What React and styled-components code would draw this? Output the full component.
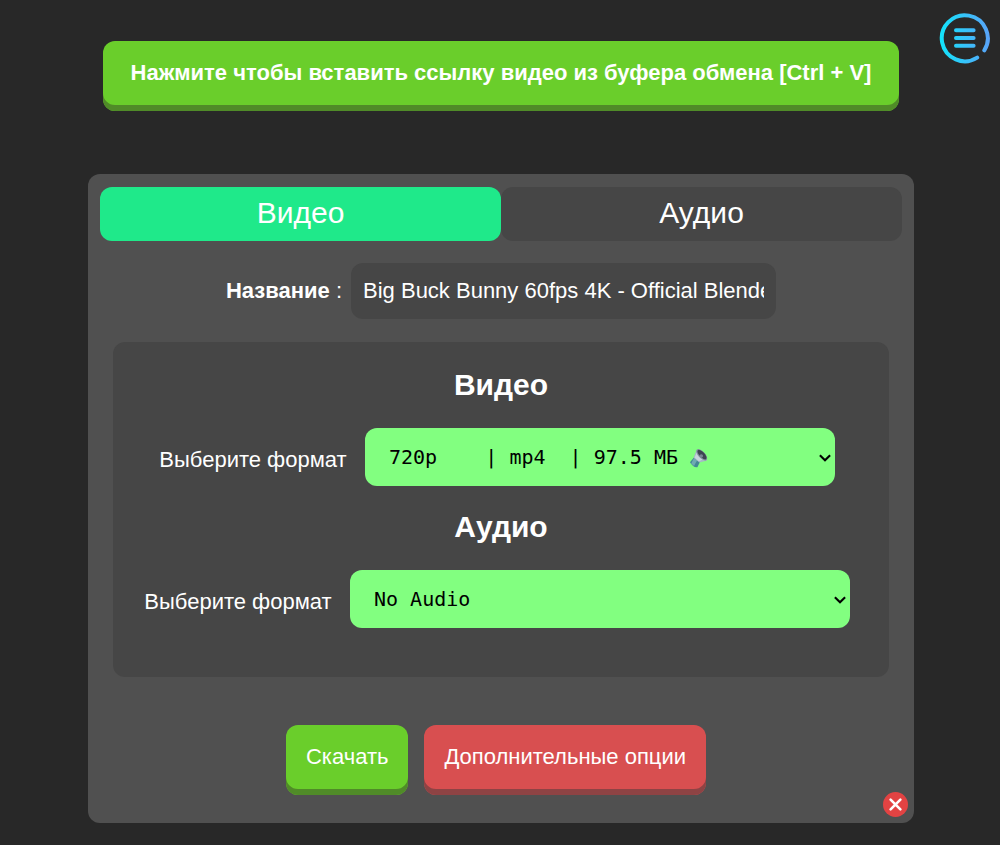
import React from "react";
import styled, { createGlobalStyle } from "styled-components";

const GlobalStyle = createGlobalStyle`
  *, *::before, *::after { box-sizing: border-box; }
  body {
    margin: 0;
    background: #282828;
    color: #fff;
    font: 22px/26px "Liberation Sans", Arial, sans-serif;
  }
  button, input { font: inherit; color: inherit; border: 0; }
  button { cursor: pointer; }
`;

const Page = styled.main`
  display: flex;
  flex-direction: column;
  align-items: center;
  min-height: 100vh;
  padding: 41px 12px 22px 14px;
`;

const Button = styled.button`
  height: 70px;
  padding: 0 20px 6px;
  border-radius: 12px;
  background: ${(p) => (p.$danger ? "#d84f50" : "#6ace2b")};
  box-shadow: inset 0 -6px 0 ${(p) => (p.$danger ? "#8e4344" : "#508b28")};
`;

const PasteButton = styled(Button)`
  width: 100%;
  max-width: 796px;
  font-weight: bold;
  white-space: nowrap;
`;

const MenuButton = styled.button`
  position: absolute;
  top: 12px;
  right: 9px;
  width: 52px;
  height: 52px;
  padding: 0;
  background: none;
  svg { display: block; }
`;

const Card = styled.section`
  position: relative;
  width: 100%;
  max-width: 826px;
  margin-top: 63px;
  padding: 13px 12px 28px;
  border-radius: 12px;
  background: #505050;
`;

const Tabs = styled.div`
  display: grid;
  grid-template-columns: 1fr 1fr;
`;

const Tab = styled.button`
  height: 54px;
  padding: 0 0 2px;
  border-radius: 12px;
  background: ${(p) => (p.$active ? "#1fe98a" : "#464646")};
  font-size: 30px;
  line-height: 34px;
`;

const NameRow = styled.div`
  display: flex;
  align-items: center;
  justify-content: center;
  gap: 9px;
  margin: 22px 0 23px;
`;

const NameInput = styled.input`
  width: 425px;
  height: 56px;
  padding: 0 12px;
  border-radius: 12px;
  background: #464646;
`;

const Panel = styled.div`
  margin: 0 13px;
  padding: 26px 10px 49px 0;
  border-radius: 12px;
  background: #464646;
`;

const Heading = styled.h2`
  margin: 0 0 26px 10px;
  font-size: 30px;
  line-height: 34px;
  text-align: center;
`;

const FormatRow = styled.div`
  display: flex;
  align-items: center;
  justify-content: center;
  gap: 16px;
  & + h2 { margin-top: 24px; }
`;

const Label = styled.label`
  min-width: 192px;
  padding-top: 5px;
  text-align: center;
  white-space: nowrap;
`;

const SelectBox = styled.div`
  position: relative;
  width: ${(p) => (p.$wide ? "500px" : "470px")};
`;

const Select = styled.select`
  appearance: none;
  display: block;
  width: 100%;
  height: 58px;
  padding: 0 24px;
  border: 0;
  border-radius: 12px;
  background-color: #82ff80;
  color: #000;
  font: 20px/26px "DejaVu Sans Mono", monospace;
`;

const Chevron = styled.svg`
  position: absolute;
  right: 3px;
  top: 25px;
  pointer-events: none;
`;

const Speaker = styled.svg`
  position: absolute;
  left: 324px;
  top: 20px;
  pointer-events: none;
`;

const Actions = styled.div`
  display: flex;
  justify-content: center;
  gap: 16px;
  margin: 48px 10px 0 0;
`;

const CloseButton = styled.button`
  position: absolute;
  right: 6px;
  bottom: 6px;
  width: 25px;
  height: 25px;
  padding: 0;
  background: none;
  svg { display: block; }
`;

const MenuIcon = () => (
  <svg width="52" height="52" viewBox="0 0 52 52" fill="none" stroke="url(#menuTint)" strokeWidth="4" strokeLinecap="round" aria-hidden="true">
    <defs>
      <linearGradient id="menuTint" gradientUnits="userSpaceOnUse" x1="1" y1="0" x2="51" y2="0">
        <stop offset="0" stopColor="#12e4fb" />
        <stop offset="1" stopColor="#5aa2f8" />
      </linearGradient>
    </defs>
    <path d="M38.2 45.6A23 23 0 1 1 45.3 38.4" />
    <path d="M17 18.2H34.6M17 26H34.6M17 33.8H34.6" />
  </svg>
);

const ChevronIcon = () => (
  <Chevron width="14" height="10" viewBox="0 0 14 10" fill="none" stroke="#000" strokeWidth="2.1" aria-hidden="true">
    <path d="M1.9 2.2 7 7.3 12.1 2.2" />
  </Chevron>
);

const SpeakerIcon = () => (
  <Speaker width="20" height="21" viewBox="0 0 20 21" aria-hidden="true">
    <path d="M1 14.2 5.1 9.3 11 13.7 8.4 19.2Q4.5 20 1 14.2Z" fill="#448895" />
    <path d="M2.2 15.4 5 17.9 8 12.5 5.1 10Z" fill="#6faab2" />
    <path d="M4.6 9.7 7.4 2.2Q13 2.5 18 12.6L10.4 14.5Z" fill="#a6b8c6" />
    <path d="M5.6 9.4 8 4 13.8 11.5 9.8 13.2Z" fill="#c8d5dd" />
    <ellipse cx="12.7" cy="6.8" rx="7.1" ry="3.4" transform="rotate(47 12.7 6.8)" fill="#8694a2" />
    <ellipse cx="13" cy="6.6" rx="6.1" ry="2.6" transform="rotate(47 13 6.6)" fill="#3d4652" />
    <circle cx="12.3" cy="8" r="1.8" fill="#788693" />
  </Speaker>
);

const CloseIcon = () => (
  <svg width="25" height="25" viewBox="0 0 25 25" aria-hidden="true">
    <circle cx="12.5" cy="12.5" r="12.5" fill="#e24343" />
    <path d="M7.6 7.6 17.4 17.4M17.4 7.6 7.6 17.4" stroke="#fff" strokeWidth="2.6" strokeLinecap="round" />
  </svg>
);

export default function App() {
  return (
    <>
      <GlobalStyle />
      <Page>
        <PasteButton type="button">Нажмите чтобы вставить ссылку видео из буфера обмена [Ctrl + V]</PasteButton>
        <MenuButton type="button" aria-label="Меню"><MenuIcon /></MenuButton>
        <Card>
          <Tabs>
            <Tab type="button" $active aria-pressed="true">Видео</Tab>
            <Tab type="button" aria-pressed="false">Аудио</Tab>
          </Tabs>
          <NameRow>
            <label htmlFor="title"><b>Название</b> :</label>
            <NameInput id="title" type="text" defaultValue="Big Buck Bunny 60fps 4K - Official Blender Foundation Short Film" />
          </NameRow>
          <Panel>
            <Heading>Видео</Heading>
            <FormatRow>
              <Label htmlFor="video-format">Выберите формат</Label>
              <SelectBox>
                <Select id="video-format">
                  <option>{"720p\u00a0\u00a0\u00a0\u00a0| mp4\u00a0\u00a0| 97.5 МБ"}</option>
                </Select>
                <SpeakerIcon />
                <ChevronIcon />
              </SelectBox>
            </FormatRow>
            <Heading>Аудио</Heading>
            <FormatRow>
              <Label htmlFor="audio-format">Выберите формат</Label>
              <SelectBox $wide>
                <Select id="audio-format">
                  <option>No Audio</option>
                </Select>
                <ChevronIcon />
              </SelectBox>
            </FormatRow>
          </Panel>
          <Actions>
            <Button type="button">Скачать</Button>
            <Button type="button" $danger>Дополнительные опции</Button>
          </Actions>
          <CloseButton type="button" aria-label="Закрыть"><CloseIcon /></CloseButton>
        </Card>
      </Page>
    </>
  );
}
